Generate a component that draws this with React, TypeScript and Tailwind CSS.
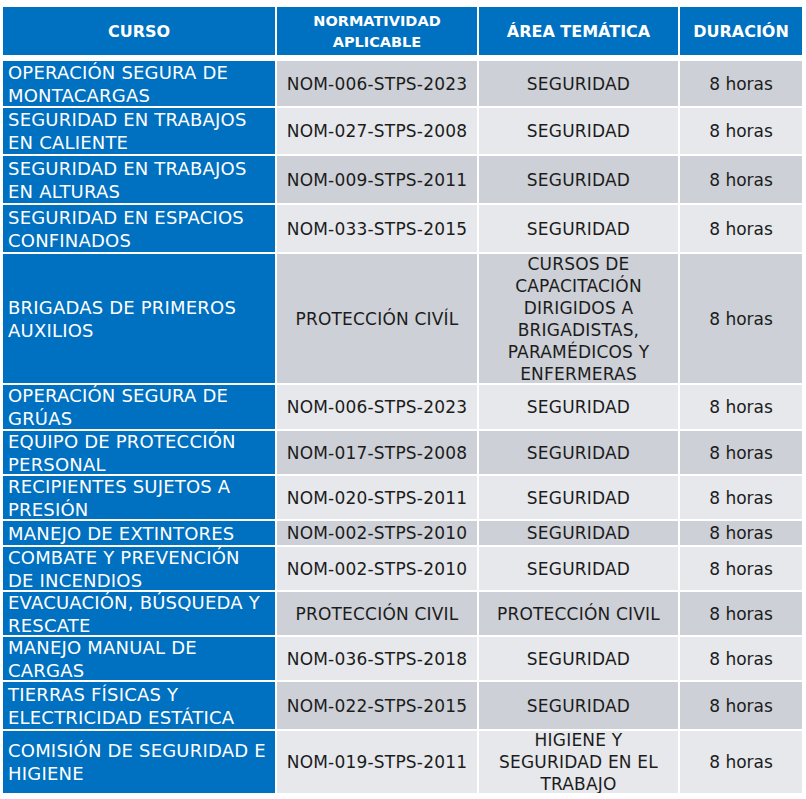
const rows = [
  { curso: "OPERACIÓN SEGURA DE MONTACARGAS", norma: "NOM-006-STPS-2023", area: ["SEGURIDAD"], h: "h-[45px]" },
  { curso: "SEGURIDAD EN TRABAJOS EN CALIENTE", norma: "NOM-027-STPS-2008", area: ["SEGURIDAD"], h: "h-[46px]" },
  { curso: "SEGURIDAD EN TRABAJOS EN ALTURAS", norma: "NOM-009-STPS-2011", area: ["SEGURIDAD"], h: "h-[47px]" },
  { curso: "SEGURIDAD EN ESPACIOS CONFINADOS", norma: "NOM-033-STPS-2015", area: ["SEGURIDAD"], h: "h-[47px]" },
  {
    curso: "BRIGADAS DE PRIMEROS AUXILIOS",
    norma: "PROTECCIÓN CIVÍL",
    area: ["CURSOS DE", "CAPACITACIÓN", "DIRIGIDOS A", "BRIGADISTAS,", "PARAMÉDICOS Y", "ENFERMERAS"],
    h: "h-[129px]",
  },
  { curso: "OPERACIÓN SEGURA DE GRÚAS", norma: "NOM-006-STPS-2023", area: ["SEGURIDAD"], h: "h-[44px]" },
  { curso: "EQUIPO DE PROTECCIÓN PERSONAL", norma: "NOM-017-STPS-2008", area: ["SEGURIDAD"], h: "h-[43px]" },
  { curso: "RECIPIENTES SUJETOS A PRESIÓN", norma: "NOM-020-STPS-2011", area: ["SEGURIDAD"], h: "h-[43px]" },
  { curso: "MANEJO DE EXTINTORES", norma: "NOM-002-STPS-2010", area: ["SEGURIDAD"], h: "h-[24px]" },
  { curso: "COMBATE Y PREVENCIÓN DE INCENDIOS", norma: "NOM-002-STPS-2010", area: ["SEGURIDAD"], h: "h-[43px]" },
  { curso: "EVACUACIÓN, BÚSQUEDA Y RESCATE", norma: "PROTECCIÓN CIVIL", area: ["PROTECCIÓN CIVIL"], h: "h-[43px]" },
  { curso: "MANEJO MANUAL DE CARGAS", norma: "NOM-036-STPS-2018", area: ["SEGURIDAD"], h: "h-[43px]" },
  { curso: "TIERRAS FÍSICAS Y ELECTRICIDAD ESTÁTICA", norma: "NOM-022-STPS-2015", area: ["SEGURIDAD"], h: "h-[47px]" },
  {
    curso: "COMISIÓN DE SEGURIDAD E HIGIENE",
    norma: "NOM-019-STPS-2011",
    area: ["HIGIENE Y", "SEGURIDAD EN EL", "TRABAJO"],
    h: "h-[62px]",
  },
];

const cols = "grid grid-cols-[272px_200px_199px_122px] gap-x-[2px]";

const App = () => {
  return (
    <div className="min-h-screen w-[806px] bg-white pl-[3px] pt-[7px] font-['DejaVu_Sans',sans-serif]">
      {/* Header */}
      <div className={`${cols} h-[48px] text-white font-bold`}>
        <div className="flex items-center justify-center bg-[#0070c0] pt-[2px] text-[16px]">CURSO</div>
        <div className="flex flex-col items-center justify-center bg-[#0070c0] pt-[1px] text-center text-[14.5px] leading-[21px]">
          <span>NORMATIVIDAD</span>
          <span>APLICABLE</span>
        </div>
        <div className="flex items-center justify-center bg-[#0070c0] pt-[2px] text-[16px]">ÁREA TEMÁTICA</div>
        <div className="flex items-center justify-center bg-[#0070c0] pt-[2px] text-[16px]">DURACIÓN</div>
      </div>

      {/* Body */}
      <div className="mt-[6px] flex flex-col gap-y-[2px]">
        {rows.map((r, i) => {
          const bg = i % 2 === 0 ? "bg-[#cdd0d6]" : "bg-[#e6e8eb]";
          return (
            <div key={i} className={`${cols} ${r.h}`}>
              <div className="flex items-center overflow-hidden bg-[#0070c0] pl-[5px] pr-[4px] text-[18px] leading-[23px] tracking-[0.2px] text-white">
                {r.curso}
              </div>
              <div className={`flex items-center justify-center overflow-hidden ${bg} px-1 text-center text-[17px] leading-[22px] tracking-[0.2px] text-[#1c1c1c]`}>
                {r.norma}
              </div>
              <div className={`flex flex-col items-center justify-center overflow-hidden ${bg} text-center text-[17px] leading-[22px] tracking-[0.2px] whitespace-nowrap text-[#1c1c1c]`}>
                {r.area.map((line) => (
                  <span key={line}>{line}</span>
                ))}
              </div>
              <div className={`flex items-center justify-center overflow-hidden ${bg} text-[17px] leading-[22px] text-[#1c1c1c]`}>
                8 horas
              </div>
            </div>
          );
        })}
      </div>
    </div>
  );
};

export default App;
